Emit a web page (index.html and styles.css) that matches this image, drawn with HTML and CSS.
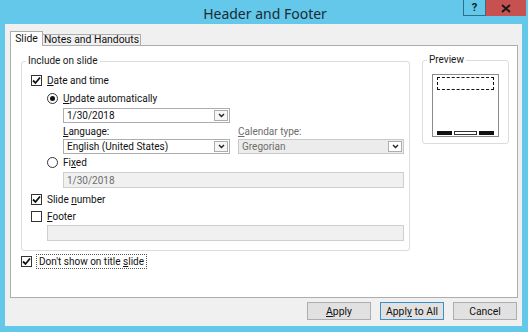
FILE: index.html
```html
<!DOCTYPE html>
<html>
<head>
<meta charset="utf-8">
<link rel="stylesheet" href="styles.css">
</head>
<body>
<div class="window">
  <div class="titlebar">
    <div class="title">Header and Footer</div>
    <div class="caption-btns">
      <div class="cap help">?</div>
      <div class="cap close">
        <svg width="10" height="9" viewBox="0 0 10 9"><path d="M1 1 L9 8 M9 1 L1 8" stroke="#1a1a1a" stroke-width="2"/></svg>
      </div>
    </div>
  </div>
  <div class="client">
    <div class="tabs">
      <div class="tab active">Slide</div>
      <div class="tab">Notes and Handouts</div>
    </div>
    <div class="panel">
      <div class="groups">
        <div class="group include">
          <div class="legend">Include on slide</div>
          <div class="row r1">
            <span class="cb checked"><svg width="9" height="9" viewBox="0 0 9 9"><path d="M1 4.5 L3.5 7 L8 1.5" stroke="#111" stroke-width="1.8" fill="none"/></svg></span>
            <span class="lbl"><u>D</u>ate and time</span>
          </div>
          <div class="row r2 ind1">
            <span class="rb checked"></span>
            <span class="lbl lbl-r"><u>U</u>pdate automatically</span>
          </div>
          <div class="row r3 ind2">
            <div class="combo w167"><span class="val">1/30/2018</span><span class="arrow"><svg width="7" height="5" viewBox="0 0 7 5"><path d="M1 1 L3.5 3.5 L6 1" stroke="#222" stroke-width="1.4" fill="none"/></svg></span></div>
          </div>
          <div class="row r4 ind2 split">
            <span class="lbl w167 nolead"><u>L</u>anguage:</span>
            <span class="lbl dis"><u>C</u>alendar type:</span>
          </div>
          <div class="row r5 ind2 split">
            <div class="combo w167"><span class="val">English (United States)</span><span class="arrow"><svg width="7" height="5" viewBox="0 0 7 5"><path d="M1 1 L3.5 3.5 L6 1" stroke="#222" stroke-width="1.4" fill="none"/></svg></span></div>
            <div class="combo disabled grow"><span class="val">Gregorian</span><span class="arrow"><svg width="7" height="5" viewBox="0 0 7 5"><path d="M1 1 L3.5 3.5 L6 1" stroke="#222" stroke-width="1.4" fill="none"/></svg></span></div>
          </div>
          <div class="row r6 ind1">
            <span class="rb"></span>
            <span class="lbl lbl-r">Fi<u>x</u>ed</span>
          </div>
          <div class="row r7 ind2">
            <div class="textbox disabled grow"><span class="val">1/30/2018</span></div>
          </div>
          <div class="row r8">
            <span class="cb checked"><svg width="9" height="9" viewBox="0 0 9 9"><path d="M1 4.5 L3.5 7 L8 1.5" stroke="#111" stroke-width="1.8" fill="none"/></svg></span>
            <span class="lbl">Slide <u>n</u>umber</span>
          </div>
          <div class="row r9">
            <span class="cb"></span>
            <span class="lbl"><u>F</u>ooter</span>
          </div>
          <div class="row r10 ind1">
            <div class="textbox disabled grow"></div>
          </div>
        </div>
        <div class="group preview">
          <div class="legend">Preview</div>
          <div class="slide">
            <div class="hdr"></div>
            <div class="bars">
              <span class="bar solid"></span>
              <span class="bar outline"></span>
              <span class="bar solid"></span>
            </div>
          </div>
        </div>
      </div>
      <div class="row dontshow">
        <span class="cb checked"><svg width="9" height="9" viewBox="0 0 9 9"><path d="M1 4.5 L3.5 7 L8 1.5" stroke="#111" stroke-width="1.8" fill="none"/></svg></span>
        <span class="focus">Don't show on title <u>s</u>lide</span>
      </div>
    </div>
    <div class="buttons">
      <div class="btn"><span><u>A</u>pply</span></div>
      <div class="btn default"><span>Appl<u>y</u> to All</span></div>
      <div class="btn"><span>Cancel</span></div>
    </div>
  </div>
</div>
</body>
</html>
```
FILE: styles.css
```css
* { box-sizing: border-box; }
html, body { margin: 0; padding: 0; }
body {
  width: 528px;
  height: 332px;
  background: #63c8ea;
  font-family: Roboto, "Noto Sans", sans-serif;
  font-size: 10px;
  color: #111;
  overflow: hidden;
}
u { text-decoration: underline; text-underline-offset: 1px; }
.window { width: 528px; height: 332px; }
.titlebar {
  height: 24px;
  position: relative;
  display: flex;
  justify-content: center;
  align-items: center;
}
.title {
  font-family: "Noto Sans", sans-serif;
  font-size: 14px;
  color: #1b2b36;
  padding-left: 2px;
  padding-top: 2px;
}
.caption-btns {
  position: absolute;
  top: 0;
  right: 2px;
  display: flex;
}
.cap {
  height: 16px;
  display: flex;
  align-items: center;
  justify-content: center;
}
.help {
  width: 23px;
  border: 1px solid #2f6f88;
  border-top: none;
  background: #63c8ea;
  font-weight: bold;
  font-size: 11px;
  color: #10202a;
}
.close {
  width: 40px;
  background: #c75050;
}
.client {
  margin-left: 5px;
  width: 517px;
  height: 302px;
  background: #f0f0f0;
  padding-top: 7px;
}
.tabs {
  display: flex;
  align-items: flex-end;
  padding-left: 5px;
  height: 14px;
  position: relative;
  z-index: 1;
}
.tab {
  border: 1px solid #adadad;
  border-bottom: none;
  background: #f0f0f0;
  height: 11px;
  line-height: 10px;
  white-space: nowrap;
  text-align: center;
  font-size: 10.4px;
}
.tab.active {
  background: #fff;
  width: 33px;
  margin-bottom: -1px;
  height: 15px;
  line-height: 13px;
}
.tab:not(.active) { border-left: none; width: 98px; }
.panel {
  margin-left: 5px;
  width: 508px;
  height: 253px;
  border: 1px solid #adadad;
  background: #fff;
  padding: 15px 0 0 10px;
}
.groups { display: flex; gap: 12px; align-items: flex-start; }
.group {
  position: relative;
  border: 1px solid #dcdcdc;
  border-radius: 3px;
}
.legend {
  position: absolute;
  top: -8px;
  left: 4px;
  background: #fff;
  padding: 0 2px;
  line-height: 14px;
  color: #1a1a1a;
  white-space: nowrap;
}
.include {
  width: 389px;
  height: 190px;
  padding: 10px 5px 0 9px;
}
.preview {
  width: 87px;
  height: 84px;
  margin-top: -1px;
  padding: 13px 0 0 9px;
}
.row { display: flex; align-items: center; }
.ind1 { padding-left: 16px; }
.ind2 { padding-left: 32px; }
.r1 { height: 16px; }
.r2 { height: 16px; margin-top: 2px; }
.r3 { height: 15px; margin-top: 2px; }
.r4 { height: 14px; margin-top: 1px; }
.r5 { height: 15px; margin-top: 1px; }
.r6 { height: 15px; margin-top: 1px; }
.r7 { height: 16px; margin-top: 2px; }
.r8 { height: 16px; margin-top: 3px; }
.r9 { height: 16px; margin-top: 1px; }
.r10 { height: 16px; margin-top: 1px; }
.split { gap: 8px; }
.cb {
  width: 11px;
  height: 11px;
  border: 1px solid #333;
  background: #fff;
  display: flex;
  align-items: center;
  justify-content: center;
  flex: none;
}
.rb {
  width: 11px;
  height: 11px;
  border: 1px solid #333;
  border-radius: 50%;
  background: #fff;
  flex: none;
  position: relative;
}
.rb.checked::after {
  content: "";
  position: absolute;
  left: 2px; top: 2px;
  width: 5px; height: 5px;
  border-radius: 50%;
  background: #111;
}
.lbl { padding-left: 5px; white-space: nowrap; }
.lbl-r { padding-left: 5px; }
.nolead { padding-left: 0; }
.lbl.dis { color: #6d6d6d; padding-left: 0; }
.w167 { width: 167px; flex: none; }
.grow { flex: 1; }
.combo {
  height: 15px;
  border: 1px solid #adadad;
  background: #fff;
  display: flex;
  align-items: center;
  padding: 1px;
}
.combo .val { flex: 1; padding-left: 2px; white-space: nowrap; overflow: hidden; }
.combo .arrow {
  width: 14px;
  height: 11px;
  border: 1px solid #adadad;
  background: #f6f6f6;
  display: flex;
  align-items: center;
  justify-content: center;
}
.combo.disabled { background: #ececec; border-color: #c8c8c8; }
.combo.disabled .val { color: #6d6d6d; }
.combo.disabled .arrow { background: #fff; border-color: #adadad; }
.textbox {
  height: 16px;
  border: 1px solid #cfcfcf;
  display: flex;
  align-items: center;
}
.textbox.disabled { background: #f0f0f0; }
.textbox .val { color: #6d6d6d; padding-left: 3px; }
.slide {
  width: 67px;
  height: 63px;
  border: 1px solid #8a8a8a;
  background: #fff;
  padding: 2px 3px 0 4px;
  display: flex;
  flex-direction: column;
  justify-content: space-between;
  align-items: stretch;
}
.hdr {
  height: 13px;
  border: 1.5px dashed #111;
  margin-right: 1px;
}
.bars { display: flex; gap: 2px; height: 4px; margin-bottom: 1px; }
.bar { display: block; height: 4px; }
.bar.solid { width: 15px; background: #111; }
.bar.outline { width: 23px; border: 1px solid #333; }
.dontshow { height: 15px; margin-top: 3px; }
.dontshow .cb { margin-right: 4px; }
.focus {
  border: 1px dotted #555;
  padding: 0 2px;
  line-height: 13px;
  height: 15px;
  white-space: nowrap;
}
.buttons {
  display: flex;
  justify-content: flex-end;
  gap: 9px;
  padding-right: 5px;
  margin-top: 4px;
}
.btn {
  width: 64px;
  height: 18px;
  border: 1px solid #adadad;
  background: #e1e1e1;
  display: flex;
  align-items: center;
  justify-content: center;
  font-size: 10.4px;
}
.btn.default { border-color: #3c8fc7; }
```
